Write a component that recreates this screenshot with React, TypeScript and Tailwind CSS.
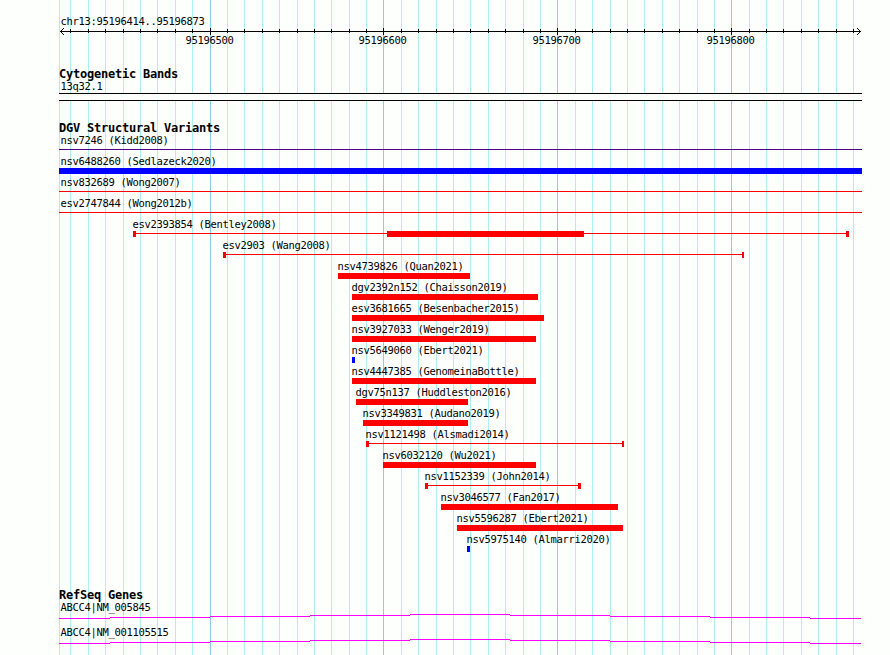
type Variant = {
  name: string;
  label: number;
  start: number;
  end: number;
  kind: "bar" | "line" | "span";
  color: string;
  caps?: [number, number];
  core?: [number, number];
};

const ORIGIN = 59;
const RED = "bg-[#ff0000]";
const BLUE = "bg-[#0000ff]";

const minorTicks = [
  70, 88, 105, 123, 140, 157, 175, 192, 227, 244, 262, 279, 297, 314, 331, 349, 366, 401, 418, 436,
  453, 470, 488, 505, 523, 540, 575, 592, 610, 627, 644, 662, 679, 697, 714, 749, 766, 783, 801, 818,
  836, 853,
];
const majorTicks = [210, 383, 557, 731];

const tickLabels = [
  { x: 185, text: "95196500" },
  { x: 358, text: "95196600" },
  { x: 532, text: "95196700" },
  { x: 706, text: "95196800" },
];

const variants: Variant[] = [
  { name: "nsv7246 (Kidd2008)", label: 60, start: 59, end: 862, kind: "line", color: "bg-[#4b0082]" },
  { name: "nsv6488260 (Sedlazeck2020)", label: 60, start: 59, end: 862, kind: "bar", color: BLUE },
  { name: "nsv832689 (Wong2007)", label: 60, start: 59, end: 862, kind: "line", color: RED },
  { name: "esv2747844 (Wong2012b)", label: 60, start: 59, end: 862, kind: "line", color: RED },
  { name: "esv2393854 (Bentley2008)", label: 132, start: 133, end: 849, kind: "span", color: RED, caps: [3, 3], core: [387, 584] },
  { name: "esv2903 (Wang2008)", label: 222, start: 223, end: 744, kind: "span", color: RED, caps: [3, 2] },
  { name: "nsv4739826 (Quan2021)", label: 337, start: 338, end: 470, kind: "bar", color: RED },
  { name: "dgv2392n152 (Chaisson2019)", label: 351, start: 352, end: 538, kind: "bar", color: RED },
  { name: "esv3681665 (Besenbacher2015)", label: 351, start: 352, end: 544, kind: "bar", color: RED },
  { name: "nsv3927033 (Wenger2019)", label: 351, start: 352, end: 536, kind: "bar", color: RED },
  { name: "nsv5649060 (Ebert2021)", label: 351, start: 352, end: 355, kind: "bar", color: BLUE },
  { name: "nsv4447385 (GenomeinaBottle)", label: 351, start: 352, end: 536, kind: "bar", color: RED },
  { name: "dgv75n137 (Huddleston2016)", label: 355, start: 356, end: 468, kind: "bar", color: RED },
  { name: "nsv3349831 (Audano2019)", label: 362, start: 363, end: 468, kind: "bar", color: RED },
  { name: "nsv1121498 (Alsmadi2014)", label: 365, start: 366, end: 624, kind: "span", color: RED, caps: [3, 2] },
  { name: "nsv6032120 (Wu2021)", label: 382, start: 383, end: 536, kind: "bar", color: RED },
  { name: "nsv1152339 (John2014)", label: 424, start: 425, end: 581, kind: "span", color: RED, caps: [3, 3] },
  { name: "nsv3046577 (Fan2017)", label: 440, start: 441, end: 618, kind: "bar", color: RED },
  { name: "nsv5596287 (Ebert2021)", label: 456, start: 457, end: 623, kind: "bar", color: RED },
  { name: "nsv5975140 (Almarri2020)", label: 466, start: 467, end: 470, kind: "bar", color: BLUE },
];

function Label({ x = 60, text }: { x?: number; text: string }) {
  return (
    <div
      className="h-[13px] whitespace-pre text-[10.5px] leading-[13px] tracking-[-0.321px]"
      style={{ marginLeft: x - ORIGIN + 0.5 }}
    >
      {text}
    </div>
  );
}

function Heading({ text }: { text: string }) {
  return (
    <h2 className="h-[13px] whitespace-pre text-[12px] font-bold leading-[14px] tracking-[-0.224px]">
      {text}
    </h2>
  );
}

function Grid() {
  return (
    <div className="absolute inset-0">
      {[59, ...minorTicks].map((x) => (
        <div key={x} className="absolute inset-y-0 w-px bg-[#afeeee]" style={{ left: x }} />
      ))}
      {majorTicks.map((x) => (
        <div key={x} className="absolute inset-y-0 w-px bg-[#87ceeb]" style={{ left: x }} />
      ))}
    </div>
  );
}

function Ruler() {
  return (
    <svg className="block h-[7px] w-[803px]" viewBox="59 28 803 7" shapeRendering="crispEdges">
      <rect x="60" y="31" width="801" height="1" />
      {minorTicks.map((x) => (
        <rect key={x} x={x} y="29" width="1" height="4" />
      ))}
      {majorTicks.map((x) => (
        <rect key={x} x={x} y="28" width="1" height="7" />
      ))}
      {[1, 2, 3].map((d) => (
        <g key={d}>
          <rect x={60 + d} y={31 - d} width="1" height="1" />
          <rect x={60 + d} y={31 + d} width="1" height="1" />
          <rect x={860 - d} y={31 - d} width="1" height="1" />
          <rect x={860 - d} y={31 + d} width="1" height="1" />
        </g>
      ))}
    </svg>
  );
}

function VariantGlyph({ v }: { v: Variant }) {
  const box = { marginLeft: v.start - ORIGIN, width: v.end - v.start };
  if (v.kind === "bar") return <div className={`h-[6px] ${v.color}`} style={box} />;
  if (v.kind === "line") return <div className={`mt-[2px] h-px ${v.color}`} style={box} />;
  const [left, right] = v.caps ?? [3, 3];
  return (
    <div className="flex h-[6px]" style={box}>
      <div className={v.color} style={{ width: left }} />
      {v.core ? (
        <>
          <div className={`mt-[2px] h-px ${v.color}`} style={{ width: v.core[0] - v.start - left }} />
          <div className={v.color} style={{ width: v.core[1] - v.core[0] }} />
          <div className={`mt-[2px] h-px flex-1 ${v.color}`} />
        </>
      ) : (
        <div className={`mt-[2px] h-px flex-1 ${v.color}`} />
      )}
      <div className={v.color} style={{ width: right }} />
    </div>
  );
}

function Gene({ name }: { name: string }) {
  return (
    <div className="h-[25px]">
      <Label text={name} />
      <svg className="block h-[5px] w-[803px]" viewBox="59 0 803 5" fill="#ff00ff" shapeRendering="crispEdges">
        {[59, 110, 210, 310, 410, 510, 610, 710, 810].map((x, i, all) => (
          <rect key={x} x={x} y={Math.abs(4 - i)} width={(all[i + 1] ?? 861) - x} height="1" />
        ))}
      </svg>
    </div>
  );
}

export default function App() {
  return (
    <main className="relative h-[655px] w-[890px] overflow-hidden bg-[#fdfffc] font-['DejaVu_Sans_Mono',monospace] text-black">
      <Grid />
      <div className="relative ml-[59px] w-[803px] pt-[15px]">
        <section className="h-[52px]">
          <Label text="chr13:95196414..95196873" />
          <Ruler />
          <div className="-mt-px grid">
            {tickLabels.map((t) => (
              <div key={t.text} className="col-start-1 row-start-1">
                <Label x={t.x} text={t.text} />
              </div>
            ))}
          </div>
        </section>

        <section className="h-[54px]">
          <Heading text="Cytogenetic Bands" />
          <Label text="13q32.1" />
          <div className="h-[8px] border-y border-black bg-[#fdfffc]" />
        </section>

        <section className="h-[467px]">
          <Heading text="DGV Structural Variants" />
          {variants.map((v) => (
            <div key={v.name} className="h-[21px]">
              <Label x={v.label} text={v.name} />
              <VariantGlyph v={v} />
            </div>
          ))}
        </section>

        <section>
          <Heading text="RefSeq Genes" />
          <Gene name="ABCC4|NM_005845" />
          <Gene name="ABCC4|NM_001105515" />
        </section>
      </div>
    </main>
  );
}
